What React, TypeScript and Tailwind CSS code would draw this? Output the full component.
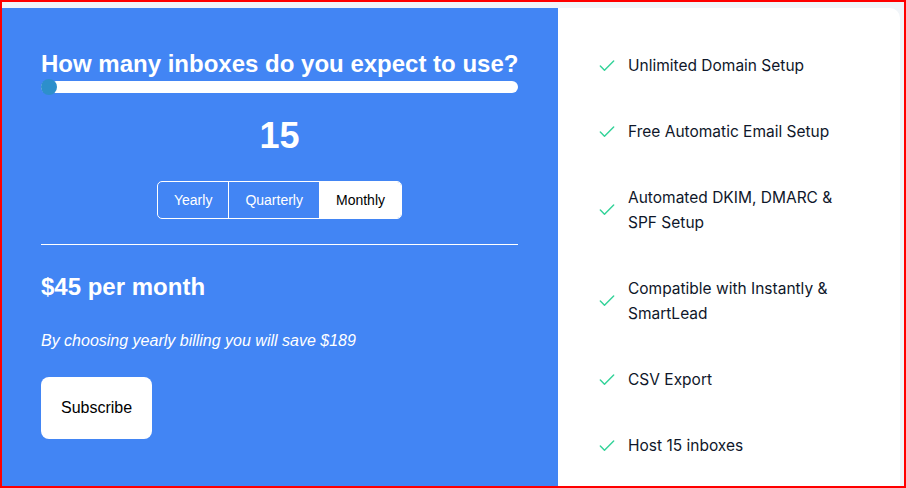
import { Check } from 'lucide-react';

const features: string[][] = [
  ['Unlimited Domain Setup'],
  ['Free Automatic Email Setup'],
  ['Automated DKIM, DMARC &', 'SPF Setup'],
  ['Compatible with Instantly &', 'SmartLead'],
  ['CSV Export'],
  ['Host 15 inboxes'],
];

const plans = ['Yearly', 'Quarterly', 'Monthly'];

export default function App() {
  const active = 'Monthly';

  return (
    <div className="h-[488px] w-[906px] overflow-hidden border-2 border-[#ff0000] bg-[#f1f5f9] pt-[6px] pr-[4px]">
      <div className="flex h-[600px] overflow-hidden rounded-tr-[10px] bg-white">
        {/* Pricing calculator */}
        <div className="w-[556px] shrink-0 bg-[#4285f4] pl-[39px] pr-[40px] pt-[42px] font-['Liberation_Sans',Arial,sans-serif] text-white">
          <h2 className="whitespace-nowrap text-[24px] font-bold leading-[28px]">How many inboxes do you expect to use?</h2>

          <div className="relative mt-[3px] h-3 rounded-full bg-white">
            <div className="absolute left-0 top-1/2 h-4 w-4 -translate-y-1/2 rounded-full bg-[#2d8fcb]"></div>
          </div>

          <p className="mt-[23px] text-center text-[36px] font-bold leading-10">15</p>

          <div className="mt-[25px] flex justify-center">
            <div className="flex h-[38px] divide-x divide-white overflow-hidden rounded-[5px] border border-white text-[14px]">
              {plans.map((plan) => (
                <button
                  key={plan}
                  className={
                    plan === active
                      ? 'bg-white px-4 text-black'
                      : 'px-4 text-white'
                  }
                >
                  {plan}
                </button>
              ))}
            </div>
          </div>

          <div className="mt-[25px] h-px bg-white"></div>

          <p className="mt-[28px] text-[24px] font-bold leading-[28px]">$45 per month</p>

          <p className="mt-[30px] text-[16px] italic leading-5">By choosing yearly billing you will save $189</p>

          <button className="mt-[26px] rounded-lg bg-white px-5 py-5 text-[16px] leading-[22px] text-black">
            Subscribe
          </button>
        </div>

        {/* Feature list */}
        <div className="flex-1 pl-[39px] pr-[30px] pt-[45px] font-['Inter',sans-serif] text-[15.5px] leading-[25px] text-[#0f172a]">
          <ul className="flex flex-col gap-[41px]">
            {features.map((lines) => (
              <li key={lines.join(' ')} className="flex items-center gap-[11px]">
                <Check className="h-5 w-5 shrink-0 text-[#34d399]" strokeWidth={1.75} />
                <span>
                  {lines.map((line, i) => (
                    <span key={i} className="block">
                      {line}
                    </span>
                  ))}
                </span>
              </li>
            ))}
          </ul>
        </div>
      </div>
    </div>
  );
}
